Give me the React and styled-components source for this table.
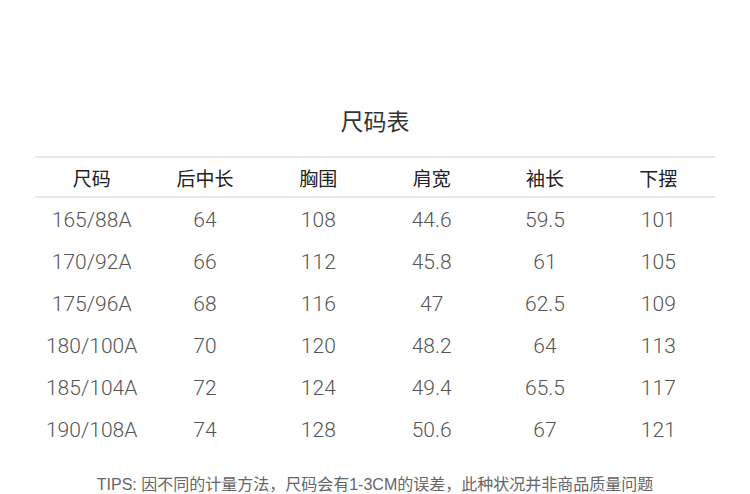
import React from 'react';
import styled, { createGlobalStyle } from 'styled-components';

const GlobalStyle = createGlobalStyle`
  body {
    margin: 0;
    background: #fff;
    font-family: 'Noto Sans CJK SC', 'Noto Sans', sans-serif;
  }
`;

const Page = styled.div`
  width: 750px;
  height: 494px;
  padding: 105px 35px 0;
  box-sizing: border-box;
  display: flex;
  flex-direction: column;
  align-items: center;
  overflow: hidden;
`;

const Title = styled.h2`
  margin: 0 0 21px;
  font-size: 23px;
  line-height: 30px;
  font-weight: 400;
  color: #333;
`;

const Table = styled.div`
  width: 100%;
`;

const Row = styled.div`
  display: grid;
  grid-template-columns: repeat(6, 1fr);
  height: 42px;
  align-items: center;
  padding-top: ${(p) => (p.$head ? '0' : '2px')};
  border-top: ${(p) => (p.$head ? '2px solid #e8e8e8' : 'none')};
  border-bottom: ${(p) => (p.$head ? '2px solid #e8e8e8' : 'none')};
  box-sizing: border-box;
`;

const HeadCell = styled.div`
  text-align: center;
  font-size: 19px;
  color: #222;
  line-height: 1;
`;

const Cell = styled.div`
  text-align: center;
  font-family: Roboto, 'Liberation Sans', sans-serif;
  font-weight: 300;
  font-size: 21px;
  color: #555;
  line-height: 1;
`;

const Tips = styled.p`
  margin: 25px 0 0;
  font-family: 'Liberation Sans', 'Noto Sans CJK SC', sans-serif;
  font-size: 16px;
  line-height: 20px;
  color: #666;
  white-space: nowrap;
`;

const head = ['尺码', '后中长', '胸围', '肩宽', '袖长', '下摆'];
const rows = [
  ['165/88A', '64', '108', '44.6', '59.5', '101'],
  ['170/92A', '66', '112', '45.8', '61', '105'],
  ['175/96A', '68', '116', '47', '62.5', '109'],
  ['180/100A', '70', '120', '48.2', '64', '113'],
  ['185/104A', '72', '124', '49.4', '65.5', '117'],
  ['190/108A', '74', '128', '50.6', '67', '121'],
];

export default function App() {
  return (
    <>
      <GlobalStyle />
      <Page>
        <Title>尺码表</Title>
        <Table>
          <Row $head>
            {head.map((h) => (
              <HeadCell key={h}>{h}</HeadCell>
            ))}
          </Row>
          {rows.map((r) => (
            <Row key={r[0]}>
              {r.map((c, i) => (
                <Cell key={i}>{c}</Cell>
              ))}
            </Row>
          ))}
        </Table>
        <Tips>TIPS: 因不同的计量方法，尺码会有1-3CM的误差，此种状况并非商品质量问题</Tips>
      </Page>
    </>
  );
}
